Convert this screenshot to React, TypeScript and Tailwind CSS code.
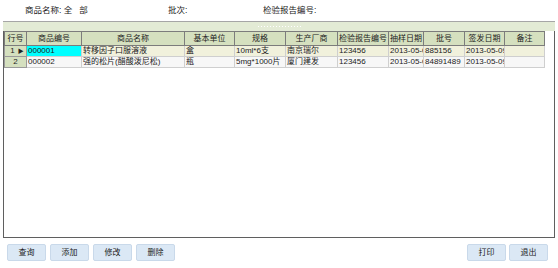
const cols = [22, 55, 103, 50, 51, 52, 51, 35, 41, 40, 40];

const headers = ["行号", "商品编号", "商品名称", "基本单位", "规格", "生产厂商", "检验报告编号", "抽样日期", "批号", "签发日期", "备注"];

const rows = [
  ["000001", "转移因子口服溶液", "盒", "10ml*6支", "南京瑞尔", "123456", "2013-05-09", "885156", "2013-05-09", ""],
  ["000002", "强的松片(醋酸泼尼松)", "瓶", "5mg*1000片", "厦门建发", "123456", "2013-05-09", "84891489", "2013-05-09", ""],
];

const font = { fontFamily: '"Liberation Sans", "Noto Sans CJK SC", sans-serif' };

function Btn({ label }: { label: string }) {
  return (
    <button className="h-[17px] w-[39px] rounded-[2px] border border-[#c9d9ea] bg-[#dbe8f5] text-[8px] leading-[15px] text-[#222]">
      {label}
    </button>
  );
}

export default function App() {
  return (
    <div className="w-[558px] h-[268px] bg-white text-[#222] overflow-hidden" style={font}>
      {/* 查询条件 */}
      <div className="flex h-[21px] items-center text-[8.5px]">
        <div className="w-[168px] pl-[25px]">商品名称: 全&nbsp;&nbsp;&nbsp;部</div>
        <div className="w-[95px]">批次:</div>
        <div>检验报告编号:</div>
      </div>

      {/* 分隔条 */}
      <div className="mx-[3px] flex h-[10px] items-center justify-center border-t border-[#a6a6a6] bg-[#e3ebd5]">
        <div className="h-[3px] w-[44px] bg-[radial-gradient(circle,#ffffff_0.7px,transparent_0.8px)] bg-[length:3px_3px]" />
      </div>

      {/* 表格 */}
      <div className="ml-[3px] mr-[3px] h-[207px] border-x border-b border-[#5f5f5f] bg-white">
        <table className="table-fixed border-collapse text-[8px]" style={{ width: 540 }}>
          <colgroup>
            {cols.map((w, i) => (
              <col key={i} style={{ width: w }} />
            ))}
          </colgroup>
          <thead>
            <tr className="h-[14px] bg-[#d5e0bf]">
              {headers.map((h) => (
                <th key={h} className="border border-[#7c7c7c] p-0 text-center font-normal leading-[12px] whitespace-nowrap overflow-hidden">
                  {h}
                </th>
              ))}
            </tr>
          </thead>
          <tbody>
            {rows.map((r, ri) => (
              <tr key={ri} className={ri === 0 ? "h-[11px] bg-[#f1f1dc]" : "h-[11px] bg-[#f7f7f7]"}>
                <td className="border border-[#9a9a9a] bg-[#d5e0bf] p-0 leading-[10px]">
                  <div className="flex items-center justify-center gap-[3px]">
                    <span className={ri === 0 ? "pl-[3px]" : ""}>{ri + 1}</span>
                    {ri === 0 && <span className="text-[6px] leading-[10px]">▶</span>}
                  </div>
                </td>
                {r.map((c, ci) => (
                  <td
                    key={ci}
                    className={
                      "border border-[#cfcfcf] p-0 pl-[1px] leading-[10px] whitespace-nowrap overflow-hidden text-clip " +
                      (ri === 0 && ci === 0 ? "bg-[#00ffff]" : "")
                    }
                  >
                    {c}
                  </td>
                ))}
              </tr>
            ))}
          </tbody>
        </table>
      </div>

      {/* 按钮 */}
      <div className="flex items-center justify-between pl-[7px] pt-[6px] pr-[10px]">
        <div className="flex gap-[4px]">
          <Btn label="查询" />
          <Btn label="添加" />
          <Btn label="修改" />
          <Btn label="删除" />
        </div>
        <div className="flex gap-[3px]">
          <Btn label="打印" />
          <Btn label="退出" />
        </div>
      </div>
    </div>
  );
}
